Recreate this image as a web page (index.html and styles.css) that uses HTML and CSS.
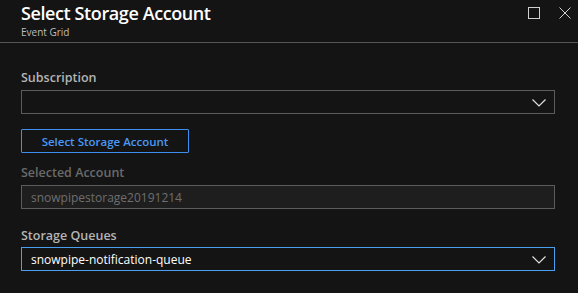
FILE: index.html
```html
<!DOCTYPE html>
<html lang="en">
<head>
<meta charset="UTF-8" />
<meta name="viewport" content="width=device-width, initial-scale=1.0" />
<title>Select Storage Account</title>
<link rel="stylesheet" href="styles.css">
</head>
<body>
  <div class="header">
    <div class="titles">
      <h1>Select Storage Account</h1>
      <div class="subtitle">Event Grid</div>
    </div>
    <div class="window-btns">
      <svg width="12" height="12" viewBox="0 0 12 12"><rect x="0.5" y="0.5" width="11" height="11" fill="none" stroke="#d0d0d0" stroke-width="1"/></svg>
      <svg width="12" height="12" viewBox="0 0 12 12"><path d="M0.5 0.5 L11.5 11.5 M11.5 0.5 L0.5 11.5" stroke="#d0d0d0" stroke-width="1"/></svg>
    </div>
  </div>

  <div class="content">
    <label class="field-label">Subscription</label>
    <div class="select">
      <span></span>
      <svg class="chev" width="14" height="8" viewBox="0 0 14 8"><path d="M0.5 0.5 L7 7 L13.5 0.5" fill="none" stroke="#e0e0e0" stroke-width="1.2"/></svg>
    </div>

    <button class="select-btn">Select Storage Account</button>

    <label class="field-label disabled">Selected Account</label>
    <div class="input readonly">snowpipestorage20191214</div>

    <label class="field-label">Storage Queues</label>
    <div class="select focused">
      <span>snowpipe-notification-queue</span>
      <svg class="chev" width="14" height="8" viewBox="0 0 14 8"><path d="M0.5 0.5 L7 7 L13.5 0.5" fill="none" stroke="#e0e0e0" stroke-width="1.2"/></svg>
    </div>
  </div>
</body>
</html>
```

FILE: styles.css
```css
body {
  margin: 0;
  background: #141414;
  font-family: "Open Sans", "Noto Sans", sans-serif;
  color: #e6e6e6;
  width: 578px;
  height: 293px;
  overflow: hidden;
}

.header {
  display: flex;
  justify-content: space-between;
  height: 42px;
  border-bottom: 1px solid #555;
  padding: 0 7px 0 21px;
}

.header h1 {
  margin: 0;
  font-size: 18px;
  font-weight: 600;
  line-height: 26px;
  color: #fff;
  letter-spacing: -0.4px;
}

.subtitle {
  font-size: 10px;
  color: #bdbdbd;
  line-height: 12px;
  margin-top: 0;
}

.window-btns {
  display: flex;
  gap: 19px;
  padding-top: 7px;
}

.content {
  padding: 26px 23px 0 21px;
  display: flex;
  flex-direction: column;
}

.field-label {
  font-size: 12.5px;
  font-weight: 600;
  color: #b4b4b4;
  line-height: 16px;
  padding-top: 1px;
  height: 20px;
}

.field-label.disabled {
  color: #6a6a6a;
}

.select, .input {
  box-sizing: border-box;
  height: 24px;
  border: 1px solid #5c5c5c;
  display: flex;
  align-items: center;
  justify-content: space-between;
  padding: 0 8px 0 9px;
  font-size: 12px;
}

.select .chev {
  margin-top: 1px;
}

.select.focused {
  border-color: #4a9ff0;
  color: #fff;
  margin-top: -1px;
}

.input.readonly {
  background: #1e1e1e;
  color: #6e6e6e;
  margin-bottom: 18px;
}

.select-btn {
  align-self: flex-start;
  box-sizing: border-box;
  width: 168px;
  height: 24px;
  margin: 15px 0 11px;
  background: transparent;
  border: 1px solid #3f8ff0;
  border-radius: 1px;
  color: #4a98f4;
  font-family: inherit;
  font-size: 11.5px;
  font-weight: 600;
  padding: 0;
}
```
